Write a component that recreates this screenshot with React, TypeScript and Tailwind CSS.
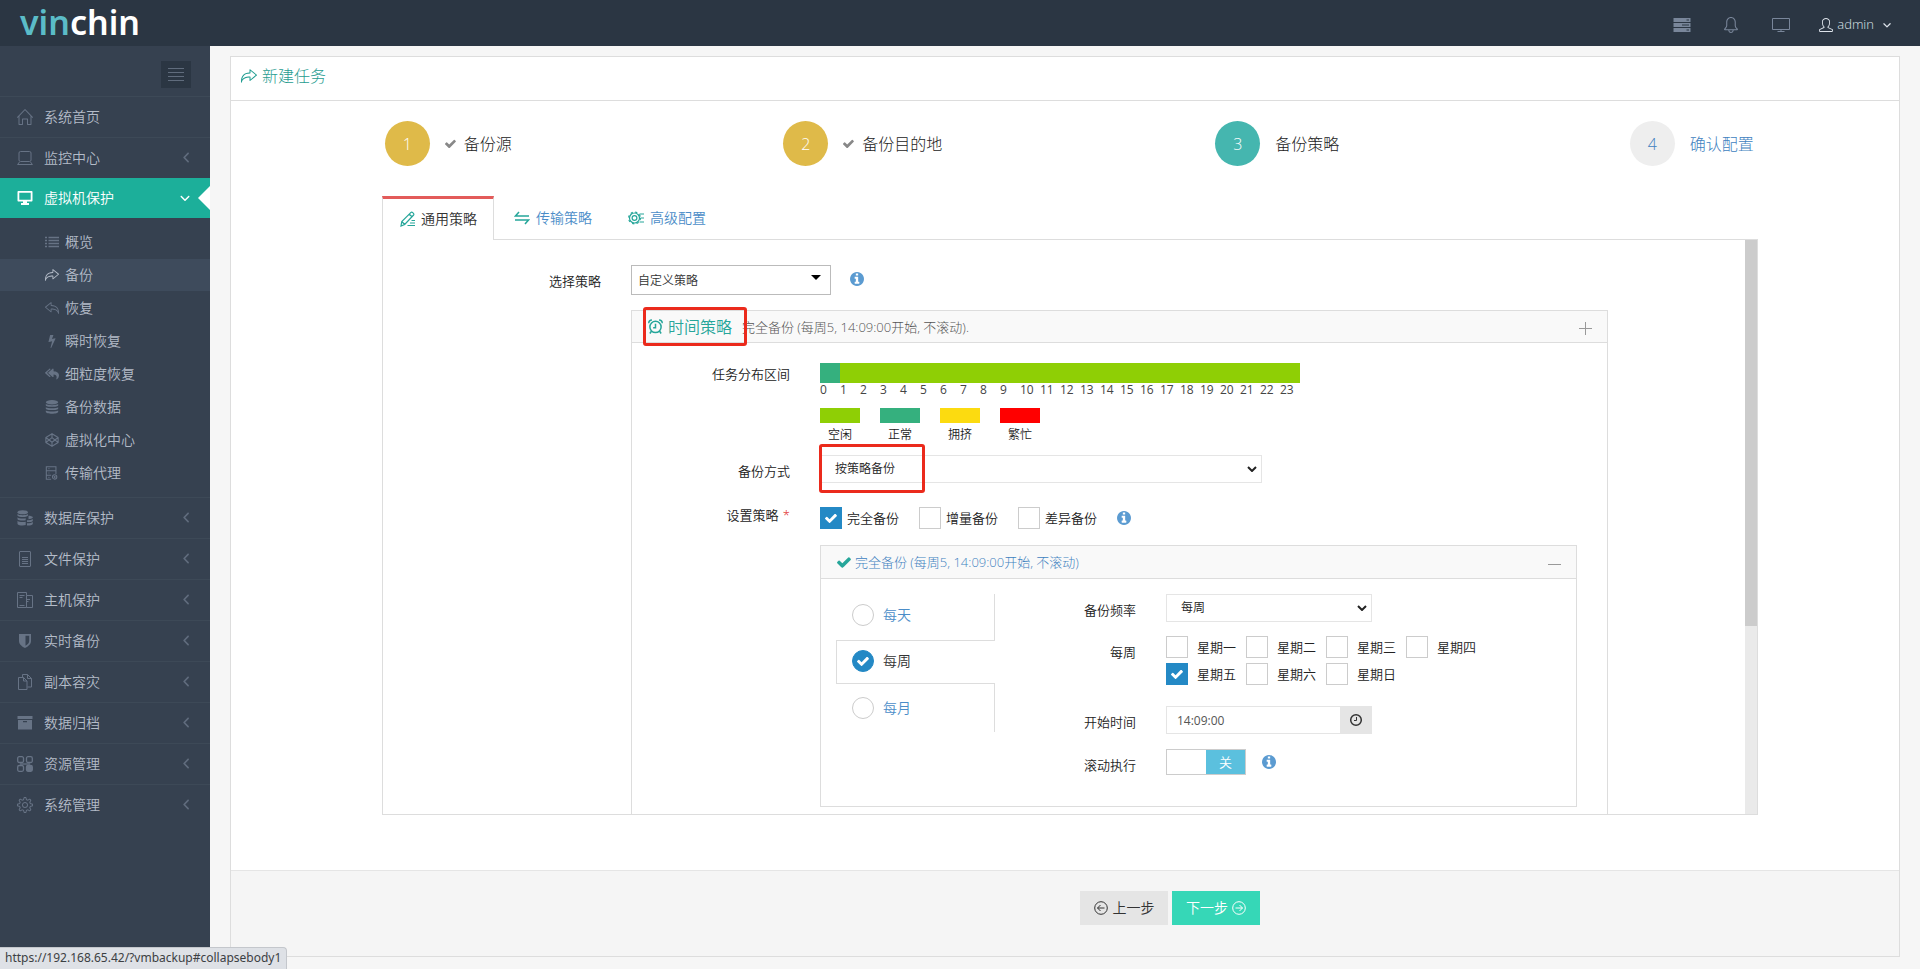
import { useState } from "react";
import type { ReactNode } from "react";
import {
  SlHome,
  SlBell,
  SlUser,
  SlSettings,
  SlActionRedo,
  SlActionUndo,
} from "react-icons/sl";
import { FaReplyAll } from "react-icons/fa";
import { FaAngleDown, FaAngleLeft } from "react-icons/fa6";

type IconProps = { className?: string };

/* ─── 图标 ─── */
const Check = ({ className }: IconProps) => (
  <svg className={className} viewBox="120 90 1560 1560" fill="currentColor">
    <path d="M1671 566q0 40-28 68l-724 724-136 136q-28 28-68 28t-68-28l-136-136-362-362q-28-28-28-68t28-68l136-136q28-28 68-28t68 28l294 295 656-657q28-28 68-28t68 28l136 136q28 28 28 68z" />
  </svg>
);

const Bolt = ({ className }: IconProps) => (
  <svg className={className} viewBox="0 0 1792 1792" fill="currentColor">
    <path d="M1333 566q18 20 7 44l-540 1157q-13 25-42 25-4 0-14-2-17-5-25.500-19t-4.500-30l197-808-406 101q-4 1-12 1-18 0-31-11-18-15-13-39l201-825q4-14 16-23t28-9h328q19 0 32 12.500t13 29.500q0 8-5 18l-171 463 396-98q8-2 12-2 19 0 34 15z" />
  </svg>
);

const Info = () => (
  <svg className="size-[14px] shrink-0 text-[#5b9bd1]" viewBox="128 128 1536 1536" fill="currentColor">
    <path d="M1152 1376v-160q0-14-9-23t-23-9h-96v-512q0-14-9-23t-23-9h-320q-14 0-23 9t-9 23v160q0 14 9 23t23 9h96v320h-96q-14 0-23 9t-9 23v160q0 14 9 23t23 9h448q14 0 23-9t9-23zm-128-896v-160q0-14-9-23t-23-9h-192q-14 0-23 9t-9 23v160q0 14 9 23t23 9h192q14 0 23-9t9-23zm640 416q0 209-103 385.500t-279.500 279.500-385.500 103-385.500-103-279.500-279.500-103-385.500 103-385.500 279.500-279.500 385.500-103 385.500 103 279.500 279.500 103 385.500z" />
  </svg>
);

const ListRows = ({ className }: IconProps) => (
  <svg className={className} viewBox="0 0 14 14" stroke="currentColor" strokeWidth="1.600" fill="none">
    <path d="M0 2.500h2M3.500 2.500H14M0 5.500h2M3.500 5.500H14M0 8.500h2M3.500 8.500H14M0 11.500h2M3.500 11.500H14" />
  </svg>
);

const Database = ({ className }: IconProps) => (
  <svg className={className} viewBox="0 0 14 14" fill="currentColor">
    <ellipse cx="7" cy="2.200" rx="6.200" ry="2.200" />
    <path d="M.8 4c2 1.500 10.400 1.500 12.400 0v1.200c0 2.200-12.400 2.200-12.400 0ZM.8 7.200c2 1.500 10.400 1.500 12.400 0v1.200c0 2.200-12.400 2.200-12.400 0ZM.8 10.400c2 1.500 10.400 1.500 12.400 0v1.400c0 2.600-12.400 2.600-12.400 0Z" />
  </svg>
);

const Shield = ({ className }: IconProps) => (
  <svg className={className} viewBox="0 0 16 16" fill="currentColor">
    <path
      fillRule="evenodd"
      d="M2 1h12v7c0 3.500-3.500 5.800-6 7-2.500-1.200-6-3.500-6-7Zm6.500 1.800v10c2-1.200 3.700-2.800 3.700-4.800V2.800Z"
    />
  </svg>
);

const Laptop = ({ className }: IconProps) => (
  <svg className={className} viewBox="0 0 16 16" fill="none" stroke="currentColor">
    <rect x="2" y="1.500" width="12" height="10" rx="1.500" />
    <path d="M2.500 12 .6 14.500h14.800L13.500 12" />
  </svg>
);

const Desktop = ({ className }: IconProps) => (
  <svg className={className} viewBox="0 0 16 16">
    <path
      fill="currentColor"
      fillRule="evenodd"
      d="M1.500 1h13c.6 0 1 .4 1 1v8.500c0 .6-.4 1-1 1H10v1.500h2V15H4v-2h2v-1.500H1.500c-.6 0-1-.4-1-1V2c0-.6.4-1 1-1Zm.8 1.700v7h11.400v-7Z"
    />
  </svg>
);

const Databases = ({ className }: IconProps) => (
  <svg className={className} viewBox="0 0 16 16" fill="currentColor">
    <ellipse cx="5.700" cy="2.300" rx="5.200" ry="2" />
    <path d="M.5 4c1.500 1.600 8.900 1.600 10.400 0v1.700c-1.500 1.800-8.900 1.800-10.400 0ZM.5 7.200c1.500 1.600 6 1.700 8.200 1v2c-2.500.7-6.700.6-8.200-1ZM.5 10.700c1.500 1.600 6 1.700 8.200 1v3.400c-2.500.8-7 .6-8.200-1.200Z" />
    <path d="M10 9.200h1.500V5.700c2 0 3.800.5 4.300 1.500v.6c-.7 1-3 1.500-5.800 1.400ZM10 10.300c2.800 0 5-.3 5.800-1.200v1.800c-.8 1-3 1.300-5.800 1.200ZM10 13.200c2.800 0 5-.3 5.800-1.200v2c-.8 1.300-3 1.700-5.800 1.600Z" />
  </svg>
);

const FileDoc = ({ className }: IconProps) => (
  <svg className={className} viewBox="0 0 16 16" fill="none" stroke="currentColor">
    <rect x="2.500" y=".5" width="11" height="15" rx=".5" />
    <path d="M5 6.500h6M5 8.500h6M5 10.500h6M5 12.500h6" />
  </svg>
);

const Hosts = ({ className }: IconProps) => (
  <svg className={className} viewBox="0 0 16 16" fill="none" stroke="currentColor">
    <path d="M9.500 15.500h-9V.5h9v3M2.500 3.500h5M2.500 5.500h3M2.500 13.500h5" />
    <path d="M9.500 15.500h6v-12h-6ZM9 7.500h4M9 9.500h2.500" />
  </svg>
);

const Copies = ({ className }: IconProps) => (
  <svg className={className} viewBox="0 0 16 16" fill="none" stroke="currentColor">
    <path d="M1.500 3.500h5l3.500 3.500v8.500H1.500ZM6.500 3.500V7H10" />
    <path d="M5.500 3V.5h5l4 4v8.500H10.500M10.500.5v4h4" />
  </svg>
);

const Archive = ({ className }: IconProps) => (
  <svg className={className} viewBox="0 0 16 16" fill="currentColor">
    <path d="M.5 1h15v3H.5Z" />
    <path fillRule="evenodd" d="M1 5h14v9.500H1Zm5 1v1.200h4V6Z" />
  </svg>
);

const Blocks = ({ className }: IconProps) => (
  <svg className={className} viewBox="0 0 16 16" fill="none" stroke="currentColor" strokeWidth="1.300">
    <rect x=".7" y=".7" width="5.800" height="5.800" rx="1.500" />
    <rect x="9.500" y=".7" width="5.800" height="5.800" rx="1.500" />
    <rect x=".7" y="9.500" width="5.800" height="5.800" rx="1.500" />
    <rect x="9.500" y="9.500" width="5.800" height="5.800" rx="1.500" fill="currentColor" />
    <path d="M3 8h10" />
  </svg>
);

const Codepen = ({ className }: IconProps) => (
  <svg className={className} viewBox="0 0 16 16" fill="none" stroke="currentColor" strokeWidth="1.300" strokeLinejoin="round">
    <path d="m8 .8 7 4.400v5.600l-7 4.400-7-4.400V5.200ZM8 .8v4.400M8 10.800v4.400M1 5.200l7 5.400 7-5.400M1 10.800l7-5.500 7 5.500" />
  </svg>
);

const Agent = ({ className }: IconProps) => (
  <svg className={className} viewBox="0 0 16 16" fill="none" stroke="currentColor" strokeWidth="1.200">
    <path d="M7 15.200H1.500V.8h11V9M1.500 5.500h11M1.500 10.500H7M4 3h1M4 8h1M4 13h1" />
    <circle cx="11" cy="12.500" r="2.500" />
    <circle cx="11" cy="12.500" r=".6" />
  </svg>
);

const Server = ({ className }: IconProps) => (
  <svg className={className} viewBox="0 0 18 16" fill="currentColor">
    <path
      fillRule="evenodd"
      d="M.5 1h17v4H.5Zm13 1.500v1H16v-1ZM.5 6h17v4H.5ZM9 7.500v1h7v-1ZM.5 11h17v4H.5Zm13 1.500v1H16v-1Z"
    />
  </svg>
);

const Monitor = ({ className }: IconProps) => (
  <svg className={className} viewBox="0 0 18 16" fill="none" stroke="currentColor">
    <path d="M.5 1.500h17v11H.5ZM9 12.500v2M5.500 14.500h7" />
  </svg>
);

const Pencil = ({ className }: IconProps) => (
  <svg className={className} viewBox="0 0 16 16" fill="none" stroke="currentColor" strokeWidth="1.200">
    <path d="M1 15l.8-4.500L11 1.300c.9-.9 3.600 1.500 2.600 2.700L4.700 13.500ZM9.300 3.200l2.700 2.600M1.800 10.500l2.900 3M11.500 9.500H15M10 12h5M7.500 14.500H15" />
  </svg>
);

const Transfer = ({ className }: IconProps) => (
  <svg className={className} viewBox="0 0 16 16" fill="none" stroke="currentColor" strokeWidth="1.500">
    <path d="M5 2 1.500 6H15M11 14l3.500-4H1" />
  </svg>
);

const GearList = ({ className }: IconProps) => (
  <svg className={className} viewBox="0 0 16 16" fill="none" stroke="currentColor" strokeWidth="1.200">
    <circle cx="6.500" cy="8" r="5" />
    <circle cx="6.500" cy="8" r="2.400" />
    <circle cx="6.500" cy="8" r="5.900" strokeDasharray="2.200 2.430" />
    <path d="M11.500 4H16M12.500 8H16M11.500 12H16" />
  </svg>
);

const AlarmClock = ({ className }: IconProps) => (
  <svg className={className} viewBox="0 0 16 16" fill="none" stroke="currentColor" strokeWidth="1.600">
    <circle cx="8" cy="8.500" r="6" />
    <path d="M8 5v4.300H5.500M.8 4.500C.8 2.500 2 1 4.200 1M15.200 4.500c0-2-1.200-3.500-3.400-3.500M3.800 12.800 2 15.500M12.200 12.800l1.800 2.700" />
  </svg>
);

const Clock = ({ className }: IconProps) => (
  <svg className={className} viewBox="0 0 14 14" fill="none" stroke="currentColor">
    <circle cx="7" cy="7" r="5.300" strokeWidth="1.500" />
    <path d="M7.500 4v3.500H5" />
  </svg>
);

const ArrowCircle = ({ className }: IconProps) => (
  <svg className={className} viewBox="0 0 14 14" fill="none" stroke="currentColor">
    <circle cx="7" cy="7" r="6.300" />
    <path d="M10.500 7h-7M6.500 4l-3 3 3 3" />
  </svg>
);

const Chevron = ({ className }: IconProps) => (
  <svg className={className} viewBox="0 0 10 6" fill="none" stroke="currentColor" strokeWidth="2">
    <path d="m1 1 4 4 4-4" />
  </svg>
);

/* ─── 数据 ─── */
const topMenu = [
  { icon: SlHome, text: "系统首页", leaf: true },
  { icon: Laptop, text: "监控中心" },
];

const subMenu = [
  { icon: ListRows, text: "概览" },
  { icon: SlActionRedo, text: "备份", current: true },
  { icon: SlActionUndo, text: "恢复" },
  { icon: Bolt, text: "瞬时恢复" },
  { icon: FaReplyAll, text: "细粒度恢复" },
  { icon: Database, text: "备份数据" },
  { icon: Codepen, text: "虚拟化中心" },
  { icon: Agent, text: "传输代理" },
];

const bottomMenu = [
  { icon: Databases, text: "数据库保护" },
  { icon: FileDoc, text: "文件保护" },
  { icon: Hosts, text: "主机保护" },
  { icon: Shield, text: "实时备份" },
  { icon: Copies, text: "副本容灾" },
  { icon: Archive, text: "数据归档" },
  { icon: Blocks, text: "资源管理" },
  { icon: SlSettings, text: "系统管理" },
];

const steps = [
  { text: "备份源", done: true, circle: "bg-[#dfba49] text-white", label: "text-[#222222]" },
  { text: "备份目的地", done: true, circle: "bg-[#dfba49] text-white", label: "text-[#222222]" },
  { text: "备份策略", done: false, circle: "bg-[#45b6af] text-white", label: "text-[#222222]" },
  { text: "确认配置", done: false, circle: "bg-[#eeeeee] text-[#3f82c0]", label: "text-[#3f82c0]" },
];

const legend = [
  { text: "空闲", color: "bg-[#8fcf05]" },
  { text: "正常", color: "bg-[#35b07e]" },
  { text: "拥挤", color: "bg-[#fcdb10]" },
  { text: "繁忙", color: "bg-[#ff0000]" },
];

const hours = Array.from({ length: 24 }, (_, i) => i);
const weekdays = ["星期一", "星期二", "星期三", "星期四", "星期五", "星期六", "星期日"];
const periods = ["每天", "每周", "每月"];

/* ─── 表单控件 ─── */
function CheckBox({ text, gap, defaultChecked }: { text: string; gap: string; defaultChecked?: boolean }) {
  return (
    <label className={`flex items-center ${gap}`}>
      <span className="relative size-[22px]">
        <input
          type="checkbox"
          defaultChecked={defaultChecked}
          className="peer block size-[22px] appearance-none border border-[#cccccc] bg-white checked:border-[#2489c5] checked:bg-[#2489c5]"
        />
        <Check className="pointer-events-none absolute inset-0 m-auto hidden size-3 text-white peer-checked:block" />
      </span>
      {text}
    </label>
  );
}

function SelectBox({ id, options, width }: { id: string; options: string[]; width: string }) {
  return (
    <div className={`relative ${width}`}>
      <select
        id={id}
        className="block h-7 w-full appearance-none border border-[#e5e5e5] bg-white pl-[14px] text-xs text-[#222222]"
      >
        {options.map((o) => (
          <option key={o}>{o}</option>
        ))}
      </select>
      <Chevron className="pointer-events-none absolute right-[5px] top-[11px] w-[10px] text-[#222222]" />
    </div>
  );
}

function MenuItem({ icon: Icon, text, leaf }: { icon: (p: IconProps) => ReactNode; text: string; leaf?: boolean }) {
  return (
    <li className="border-t border-[#3d4957]">
      <a href="#" className="flex h-10 items-center pb-px pl-[17px] pr-[17px] text-sm text-[#b4bcc8]">
        <Icon className="mr-[11px] size-4 text-[#677385]" />
        <span className="flex-1">{text}</span>
        {!leaf && <FaAngleLeft className="size-[13px] text-[#606c7d]" />}
      </a>
    </li>
  );
}

/* ─── 侧边栏 ─── */
function Sidebar() {
  return (
    <nav className="w-[210px] shrink-0 bg-[#364150]">
      <div className="flex h-[50px] justify-end pr-[19px] pt-[15px]">
        <button aria-label="收起菜单" className="flex h-[27px] w-[30px] flex-col items-center justify-center gap-[3px] bg-[#2b3643]">
          {[0, 1, 2, 3].map((i) => (
            <span key={i} className="h-px w-4 bg-[#606c7d]" />
          ))}
        </button>
      </div>
      <ul>
        {topMenu.map((m) => (
          <MenuItem key={m.text} {...m} />
        ))}
        <li>
          <a href="#" className="relative flex h-10 items-center bg-[#1caf9a] pl-[17px] pr-[19px] text-sm text-white">
            <Desktop className="mr-[11px] size-4" />
            <span className="flex-1">虚拟机保护</span>
            <FaAngleDown className="size-3" />
            <span className="absolute right-0 top-2 border-y-12 border-r-12 border-y-transparent border-r-white" />
          </a>
          <ul className="flex flex-col gap-px py-2">
            {subMenu.map(({ icon: Icon, text, current }) => (
              <li key={text}>
                <a
                  href="#"
                  className={`flex h-8 items-center gap-[6px] pb-px pl-[45px] text-sm text-[#b4bcc8] ${current ? "bg-[#3e4b5c]" : ""}`}
                >
                  <Icon className={`size-[14px] ${current ? "text-[#b4bcc8]" : "text-[#677385]"}`} />
                  {text}
                </a>
              </li>
            ))}
          </ul>
        </li>
        {bottomMenu.map((m) => (
          <MenuItem key={m.text} {...m} />
        ))}
      </ul>
    </nav>
  );
}

/* ─── 完全备份面板 ─── */
function FullBackup() {
  const [period, setPeriod] = useState("每周");

  return (
    <div className="mt-4 border border-[#dddddd]">
      <div className="box-content flex h-8 items-center border-b border-[#dddddd] bg-[#f9f9f9] pl-4 pr-[15px]">
        <Check className="mr-1 size-[14px] text-[#26a69a]" />
        <a href="#" className="flex-1 font-light text-[#3f82c0]">
          完全备份 (每周5, 14:09:00开始, 不滚动)
        </a>
        <button aria-label="折叠" className="mt-1 h-px w-[13px] bg-[#999999]" />
      </div>
      <div className="flex h-[227px] px-[15px] pt-[15px]">
        <div className="w-[159px] text-sm">
          {periods.map((p) => (
            <label
              key={p}
              className={`flex items-center gap-[9px] first:pb-1 last:h-12 ${
                p === period
                  ? "h-[44px] border-y border-l border-[#dddddd] pb-[2px] pl-[15px] text-[#333333]"
                  : "h-[46px] border-r border-[#dddddd] pl-4 text-[#4b8dc8]"
              }`}
            >
              <span className="relative size-[22px]">
                <input
                  type="radio"
                  name="period"
                  checked={p === period}
                  onChange={() => setPeriod(p)}
                  className="peer block size-[22px] appearance-none rounded-full border border-[#cccccc] bg-white checked:border-[#2489c5] checked:bg-[#2489c5]"
                />
                <Check className="pointer-events-none absolute inset-0 m-auto hidden size-3 text-white peer-checked:block" />
              </span>
              {p}
            </label>
          ))}
        </div>
        <div className="ml-[89px] flex-1">
          <div className="flex gap-[30px]">
            <label htmlFor="freq" className="w-[52px] pt-[6px] text-right">备份频率</label>
            <SelectBox id="freq" options={["每周", "每天", "每月"]} width="w-[206px]" />
          </div>
          <div className="mt-[14px] flex gap-[30px]">
            <span className="w-[52px] pt-[6px] text-right">每周</span>
            <div className="grid grid-cols-[repeat(4,80px)] gap-y-[5px]">
              {weekdays.map((d) => (
                <CheckBox key={d} text={d} gap="gap-[9px]" defaultChecked={d === "星期五"} />
              ))}
            </div>
          </div>
          <div className="mt-[21px] flex gap-[30px]">
            <label htmlFor="start" className="w-[52px] pt-[6px] text-right">开始时间</label>
            <div className="flex w-[206px]">
              <input
                id="start"
                defaultValue="14:09:00"
                className="h-7 w-0 flex-1 border border-r-0 border-[#e5e5e5] pl-[10px] text-xs font-normal text-[#555555] outline-none"
              />
              <button aria-label="选择时间" className="flex w-8 items-center justify-center bg-[#e5e5e5] text-[#333333]">
                <Clock className="size-[14px]" />
              </button>
            </div>
          </div>
          <div className="mt-[15px] flex gap-[30px]">
            <span className="w-[52px] pt-[6px] text-right">滚动执行</span>
            <div className="flex h-[26px] items-center gap-4">
              <button role="switch" aria-checked="false" aria-label="滚动执行" className="flex h-[26px] w-20 border border-[#cccccc] bg-white">
                <span className="flex-1" />
                <span className="flex h-full flex-1 items-center justify-center bg-[#5bc0de] text-white">关</span>
              </button>
              <Info />
            </div>
          </div>
        </div>
      </div>
    </div>
  );
}

/* ─── 通用策略 ─── */
function GeneralPolicy() {
  return (
    <div className="flex h-[576px] border border-[#dddddd] text-[13px] leading-5 text-[#222222]">
      <div className="min-w-0 flex-1 overflow-hidden pr-[137px] pt-[25px]">
        <div className="flex">
          <label htmlFor="policy" className="w-[218px] pt-[6px] text-right">选择策略</label>
          <div className="relative ml-[30px] w-[200px]">
            <select
              id="policy"
              className="block h-[30px] w-full appearance-none border border-[#bbbbbb] bg-white px-[6px] pt-[2px] text-xs text-[#333333]"
            >
              <option>自定义策略</option>
            </select>
            <span className="pointer-events-none absolute right-[10px] top-[10px] border-x-5 border-t-5 border-x-transparent border-t-black" />
          </div>
          <div className="ml-[19px] flex h-7 items-center">
            <Info />
          </div>
        </div>

        <div className="ml-[248px] mt-[15px] border border-[#dddddd]">
          <div className="relative flex h-8 items-center border-b border-[#dddddd] bg-[#f9f9f9] pl-4 pr-[15px]">
            <AlarmClock className="size-[15px] text-[#26a69a]" />
            <a href="#" className="ml-[5px] text-base leading-5 text-[#26a69a]">时间策略</a>
            <span className="ml-[10px] flex-1 font-light text-[#555555]">完全备份 (每周5, 14:09:00开始, 不滚动).</span>
            <button aria-label="展开" className="relative mt-1 size-[13px]">
              <span className="absolute left-0 top-[6px] h-px w-[13px] bg-[#999999]" />
              <span className="absolute left-[6px] top-0 h-[13px] w-px bg-[#999999]" />
            </button>
            <span className="pointer-events-none absolute -top-1 left-[11px] h-[39px] w-[104px] rounded-[3px] border-3 border-[#eb2a1c]" />
          </div>

          <div className="pb-10 pl-[80px] pr-[30px] pt-5">
            <div className="flex">
              <span className="w-[78px] pt-px text-right">任务分布区间</span>
              <div className="ml-[30px]">
                <div className="flex">
                  {hours.map((h) => (
                    <div key={h} className="w-5 text-xs font-normal leading-[14px] text-[#444444]">
                      <div className={`h-5 ${h === 0 ? "bg-[#35b07e]" : "bg-[#8fcf05]"}`} />
                      {h}
                    </div>
                  ))}
                </div>
                <div className="mt-[11px] flex gap-5">
                  {legend.map((l) => (
                    <div key={l.text} className="w-10 text-center text-xs leading-6">
                      <div className={`h-[15px] ${l.color}`} />
                      {l.text}
                    </div>
                  ))}
                </div>
              </div>
            </div>

            <div className="relative mt-2 flex">
              <label htmlFor="mode" className="w-[78px] pt-[6px] text-right">备份方式</label>
              <div className="ml-[30px]">
                <SelectBox id="mode" options={["按策略备份"]} width="w-[442px]" />
              </div>
              <span className="pointer-events-none absolute -top-[11px] left-[107px] h-[49px] w-[106px] rounded-[3px] border-3 border-[#eb2a1c]" />
            </div>

            <div className="mt-6 flex">
              <span className="w-[78px] text-right leading-4">
                设置策略 <span className="ml-px text-[#e02222]">*</span>
              </span>
              <div className="ml-[30px] flex-1">
                <div className="flex items-center gap-5">
                  <CheckBox text="完全备份" gap="gap-[5px]" defaultChecked />
                  <CheckBox text="增量备份" gap="gap-[5px]" />
                  <CheckBox text="差异备份" gap="gap-[5px]" />
                  <Info />
                </div>
                <FullBackup />
              </div>
            </div>
          </div>
        </div>
      </div>
      {/* 滚动条 */}
      <div className="w-3 bg-[#eaeaea]">
        <div className="h-[386px] bg-[#cccccc]" />
      </div>
    </div>
  );
}

export default function App() {
  return (
    <div className="flex min-h-screen flex-col bg-[#f6f6f6] font-['Open_Sans','Noto_Sans_CJK_SC',sans-serif] font-[350]">
      <header className="flex h-[46px] items-center justify-between bg-[#2b3643] pl-5 pr-7">
        <a href="#" className="pb-[2px] font-['Noto_Sans',sans-serif] text-[34px] font-semibold leading-none text-white">
          <span className="text-[#5bbcc8]">vin</span>chin
        </a>
        <div className="flex items-center pt-[3px] text-[#79869a]">
          <Server className="w-[18px]" />
          <SlBell className="ml-8 size-4" />
          <Monitor className="ml-[33px] w-[18px]" />
          <button className="ml-[29px] flex items-center text-[13px] text-[#dde3ea]">
            <SlUser className="mr-1 size-[14px]" />
            admin
            <FaAngleDown className="ml-2 size-[10px]" />
          </button>
        </div>
      </header>

      <div className="flex flex-1">
        <Sidebar />
        <main className="min-w-0 flex-1 pb-3 pl-5 pr-5 pt-[10px]">
          <div className="border border-[#dddddd] bg-white">
            <h1 className="flex h-11 items-center gap-[5px] border-b border-[#dddddd] pb-[6px] pl-[10px] text-base font-light text-[#1f9c90]">
              <SlActionRedo className="size-4" />
              新建任务
            </h1>

            <div className="pl-[10px]">
              <ul className="grid grid-cols-4 pt-5">
                {steps.map((s, i) => (
                  <li key={s.text}>
                    <a href="#" className={`flex items-center justify-center text-base font-light ${s.label}`}>
                      <span className={`mr-[15px] flex size-[45px] items-center justify-center rounded-full ${s.circle}`}>
                        {i + 1}
                      </span>
                      {s.done && <Check className="mr-2 size-[11px] text-[#888888]" />}
                      {s.text}
                    </a>
                  </li>
                ))}
              </ul>

              <div className="mx-auto mt-[30px] w-[83%]">
                <div className="flex text-sm">
                  <a href="#" className="relative -mb-px flex h-11 w-[112px] items-center gap-[5px] border-x border-t-3 border-x-[#dddddd] border-t-[#e35b5a] bg-white pb-[2px] pl-[17px] text-[#333333]">
                    <Pencil className="size-4 text-[#26a69a]" />
                    通用策略
                  </a>
                  <a href="#" className="ml-5 flex items-center gap-[6px] text-[#4b8dc8]">
                    <Transfer className="size-4 text-[#26a69a]" />
                    传输策略
                  </a>
                  <a href="#" className="ml-9 flex items-center gap-[6px] text-[#4b8dc8]">
                    <GearList className="size-4 text-[#26a69a]" />
                    高级配置
                  </a>
                </div>
                <GeneralPolicy />
              </div>
            </div>

            <div className="mt-[55px] border-t border-[#e5e5e5] bg-[#f5f5f5] pb-[31px] pt-5">
              <div className="ml-[50%] flex gap-1 pl-[15px] text-sm">
                <button className="flex h-[34px] w-[88px] items-center justify-center gap-[5px] bg-[#e5e5e5] text-[#333333]">
                  <ArrowCircle className="size-[14px]" />
                  上一步
                </button>
                <button className="flex h-[34px] w-[88px] items-center justify-center gap-1 bg-[#36d7b7] text-white">
                  下一步
                  <ArrowCircle className="size-[14px] rotate-180" />
                </button>
              </div>
            </div>
          </div>
        </main>
      </div>

      <div className="fixed bottom-0 left-0 h-[22px] rounded-tr border-r border-t border-[#c4c7cc] bg-[#dee1e6] px-[5px] font-['Noto_Sans',sans-serif] text-xs font-normal leading-5 text-[#3c4043]">
        https://192.168.65.42/?vmbackup#collapsebody1
      </div>
    </div>
  );
}
